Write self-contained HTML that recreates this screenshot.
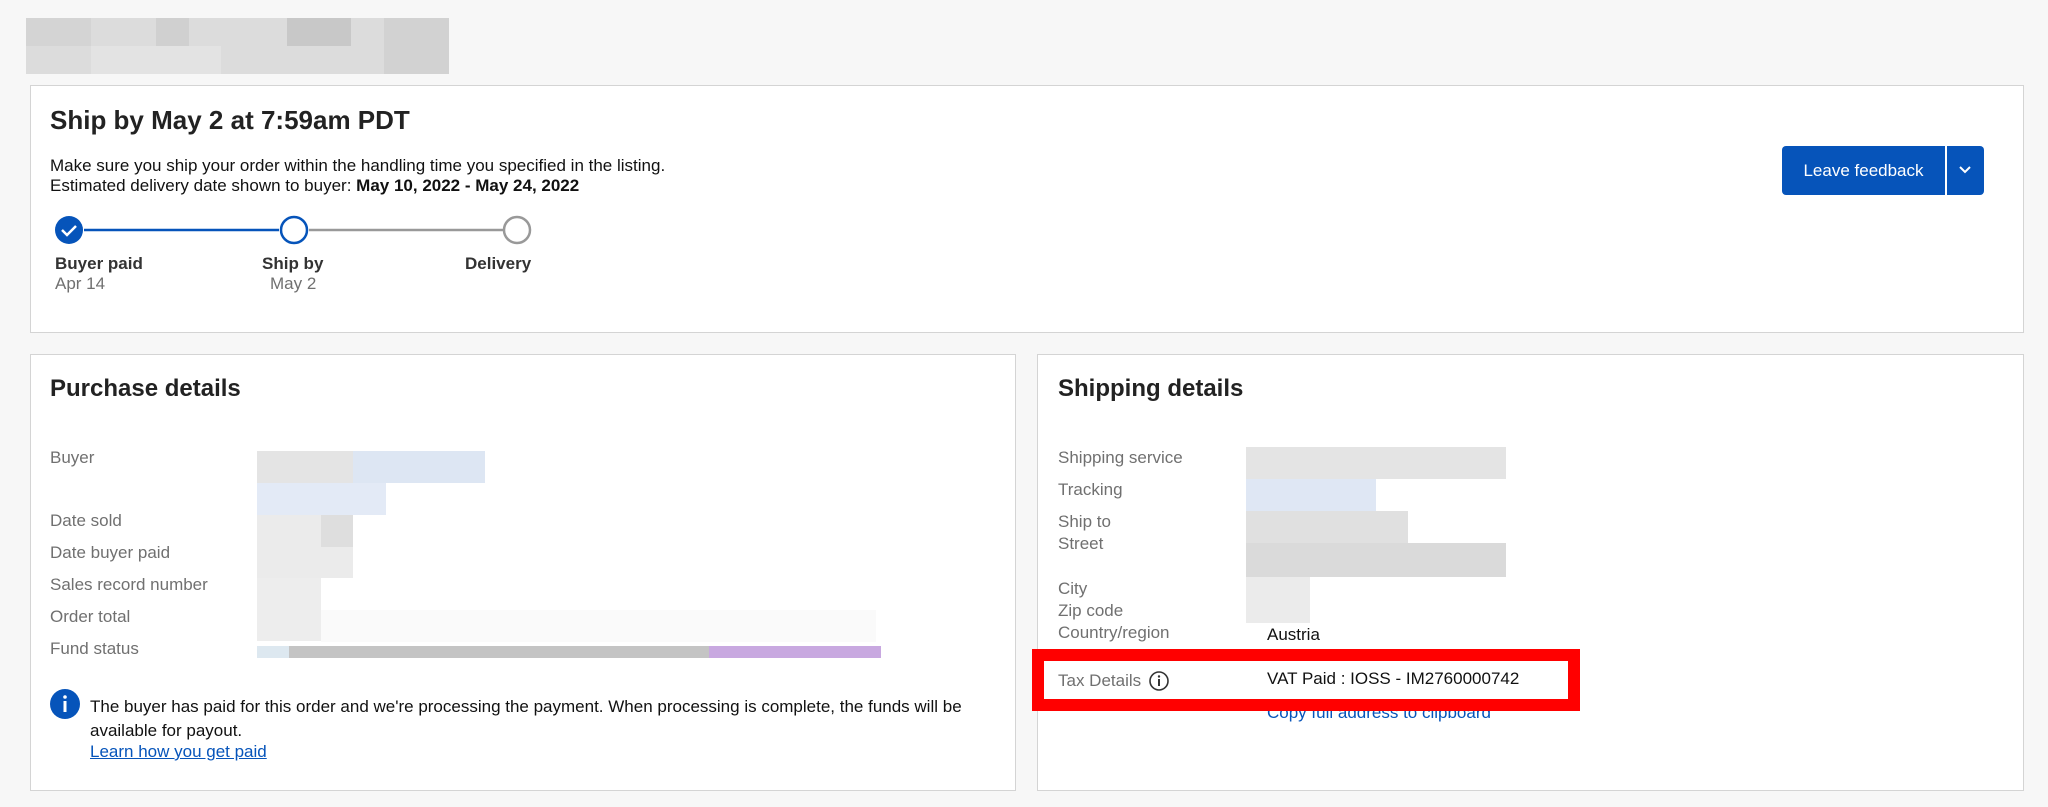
<!DOCTYPE html>
<html><head><meta charset="utf-8"><style>
*{box-sizing:border-box;margin:0;padding:0}
body{width:2048px;height:807px;background:#f7f7f7;font-family:"Liberation Sans",Arial,sans-serif;color:#111;position:relative;overflow:hidden}
.abs{position:absolute}
.card{position:absolute;background:#fff;border:1px solid #d4d4d4}
.lbl{position:absolute;font-size:17px;color:#707070;white-space:nowrap}
.val{position:absolute;font-size:17px;color:#111;white-space:nowrap}
.b{position:absolute}
</style></head><body>
<!-- blurred header -->
<div class="b" style="left:26px;top:18px;width:423px;height:56px;background:#dcdcdc"></div>
<div class="b" style="left:26px;top:18px;width:65px;height:28px;background:#d4d4d4"></div>
<div class="b" style="left:156px;top:18px;width:33px;height:28px;background:#d0d0d0"></div>
<div class="b" style="left:287px;top:18px;width:64px;height:28px;background:#c8c8c8"></div>
<div class="b" style="left:91px;top:46px;width:130px;height:28px;background:#e3e3e3"></div>
<div class="b" style="left:384px;top:18px;width:65px;height:56px;background:#d2d2d2"></div>

<div class="card" style="left:30px;top:85px;width:1994px;height:248px"></div>
<div class="abs" style="left:50px;top:105px;font-size:26px;font-weight:bold;color:#222">Ship by May 2 at 7:59am PDT</div>
<div class="abs" style="left:50px;top:156px;font-size:17px;line-height:20px;color:#111">Make sure you ship your order within the handling time you specified in the listing.<br>Estimated delivery date shown to buyer: <b>May 10, 2022 - May 24, 2022</b></div>
<svg class="abs" style="left:50px;top:212px" width="490" height="40">
<line x1="34" y1="18" x2="229" y2="18" stroke="#0654ba" stroke-width="2.5"/>
<line x1="259" y1="18" x2="453" y2="18" stroke="#999" stroke-width="2.5"/>
<circle cx="19" cy="18" r="14" fill="#0654ba"/>
<path d="M12 18l5 5 9-9" stroke="#fff" stroke-width="2.5" fill="none"/>
<circle cx="244" cy="18" r="13" fill="#fff" stroke="#0654ba" stroke-width="2.5"/>
<circle cx="467" cy="18" r="13" fill="#fff" stroke="#999" stroke-width="2.5"/>
</svg>
<div class="abs" style="left:55px;top:254px;font-size:17px;font-weight:bold;color:#333">Buyer paid</div>
<div class="abs" style="left:55px;top:274px;font-size:17px;color:#707070">Apr 14</div>
<div class="abs" style="left:262px;top:254px;font-size:17px;font-weight:bold;color:#333">Ship by</div>
<div class="abs" style="left:270px;top:274px;font-size:17px;color:#707070">May 2</div>
<div class="abs" style="left:465px;top:254px;font-size:17px;font-weight:bold;color:#333">Delivery</div>
<div class="abs" style="left:1782px;top:146px;width:202px;height:49px;background:#0654ba;border-radius:4px"></div>
<div class="abs" style="left:1945px;top:146px;width:2px;height:49px;background:#fff"></div>
<div class="abs" style="left:1782px;top:146px;width:163px;line-height:49px;text-align:center;color:#fff;font-size:17px">Leave feedback</div>
<svg class="abs" style="left:1958px;top:164px" width="14" height="12"><path d="M2 3l5 5 5-5" stroke="#fff" stroke-width="2" fill="none"/></svg>

<!-- purchase -->
<div class="card" style="left:30px;top:354px;width:986px;height:437px"></div>
<div class="abs" style="left:50px;top:375px;font-size:24px;font-weight:bold;color:#222">Purchase details</div>
<div class="lbl" style="left:50px;top:448px">Buyer</div>
<div class="lbl" style="left:50px;top:511px">Date sold</div>
<div class="lbl" style="left:50px;top:543px">Date buyer paid</div>
<div class="lbl" style="left:50px;top:575px">Sales record number</div>
<div class="lbl" style="left:50px;top:607px">Order total</div>
<div class="lbl" style="left:50px;top:639px">Fund status</div>
<div class="b" style="left:257px;top:451px;width:96px;height:32px;background:#e4e4e4"></div>
<div class="b" style="left:353px;top:451px;width:132px;height:32px;background:#dde6f3"></div>
<div class="b" style="left:257px;top:483px;width:129px;height:32px;background:#e3eaf6"></div>
<div class="b" style="left:257px;top:515px;width:96px;height:63px;background:#ebebeb"></div>
<div class="b" style="left:321px;top:515px;width:32px;height:32px;background:#dedede"></div>
<div class="b" style="left:257px;top:578px;width:64px;height:63px;background:#ededed"></div>
<div class="b" style="left:321px;top:610px;width:555px;height:32px;background:#fafafa"></div>
<div class="b" style="left:257px;top:646px;width:32px;height:12px;background:#dde8f0"></div>
<div class="b" style="left:289px;top:646px;width:420px;height:12px;background:#c4c4c4"></div>
<div class="b" style="left:709px;top:646px;width:172px;height:12px;background:#c8a8e0"></div>
<svg class="abs" style="left:50px;top:689px" width="30" height="30"><circle cx="15" cy="15" r="15" fill="#0654ba"/><rect x="13.5" y="12" width="3" height="11" fill="#fff"/><circle cx="15" cy="8" r="1.8" fill="#fff"/></svg>
<div class="abs" style="left:90px;top:695px;width:910px;font-size:17px;line-height:24px;color:#111">The buyer has paid for this order and we're processing the payment. When processing is complete, the funds will be available for payout.</div>
<div class="abs" style="left:90px;top:742px;font-size:17px;color:#0654ba;text-decoration:underline">Learn how you get paid</div>

<!-- shipping -->
<div class="card" style="left:1037px;top:354px;width:987px;height:437px"></div>
<div class="abs" style="left:1058px;top:375px;font-size:24px;font-weight:bold;color:#222">Shipping details</div>
<div class="lbl" style="left:1058px;top:448px">Shipping service</div>
<div class="lbl" style="left:1058px;top:480px">Tracking</div>
<div class="lbl" style="left:1058px;top:512px">Ship to</div>
<div class="lbl" style="left:1058px;top:534px">Street</div>
<div class="lbl" style="left:1058px;top:579px">City</div>
<div class="lbl" style="left:1058px;top:601px">Zip code</div>
<div class="lbl" style="left:1058px;top:623px">Country/region</div>
<div class="b" style="left:1246px;top:447px;width:260px;height:32px;background:#e4e4e4"></div>
<div class="b" style="left:1246px;top:479px;width:130px;height:32px;background:#dfe7f4"></div>
<div class="b" style="left:1246px;top:511px;width:162px;height:32px;background:#e0e0e0"></div>
<div class="b" style="left:1246px;top:543px;width:260px;height:34px;background:#dadada"></div>
<div class="b" style="left:1246px;top:577px;width:64px;height:46px;background:#ebebeb"></div>
<div class="val" style="left:1267px;top:625px">Austria</div>
<div class="val" style="left:1267px;top:669px">VAT Paid : IOSS - IM2760000742</div>
<div class="lbl" style="left:1058px;top:671px">Tax Details</div>
<svg class="abs" style="left:1148px;top:670px" width="22" height="22"><circle cx="11" cy="11" r="9" fill="none" stroke="#333" stroke-width="1.6"/><rect x="10" y="9" width="2" height="7" fill="#333"/><circle cx="11" cy="6.5" r="1.2" fill="#333"/></svg>
<div class="abs" style="left:1267px;top:703px;font-size:17px;color:#0654ba">Copy full address to clipboard</div>
<div class="abs" style="left:1032px;top:649px;width:548px;height:62px;border:12px solid #ff0000"></div>
</body></html>
